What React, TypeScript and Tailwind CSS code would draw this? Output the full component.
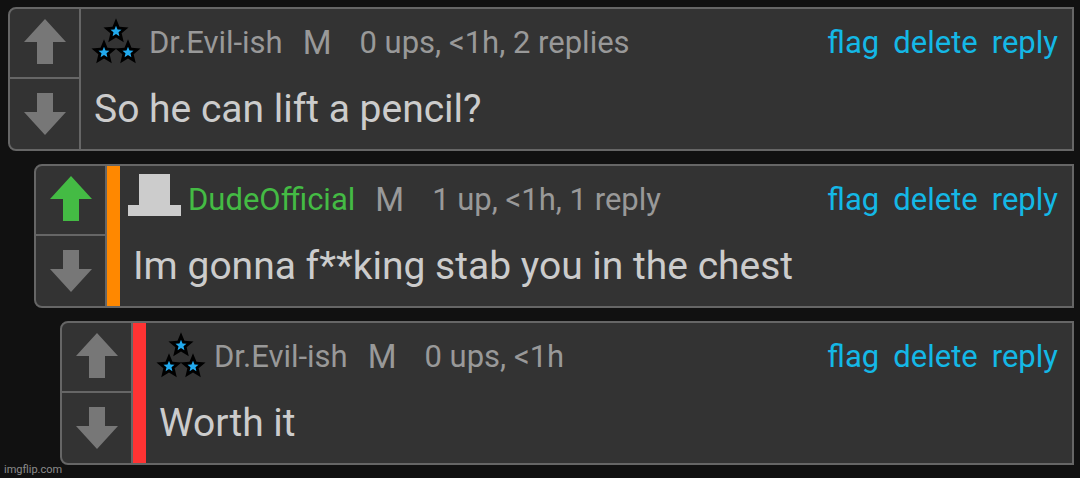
import React from 'react';

interface Comment {
  id: number;
  user: string;
  icon: 'stars' | 'hat';
  meta: string;
  text: string;
  upvoted?: boolean;
  nameClass: string;
  indentClass: string;
  barClass?: string;
}

const comments: Comment[] = [
  {
    id: 1,
    user: 'Dr.Evil-ish',
    icon: 'stars',
    meta: '0 ups, <1h, 2 replies',
    text: 'So he can lift a pencil?',
    nameClass: 'text-[#999]',
    indentClass: 'ml-0',
  },
  {
    id: 2,
    user: 'DudeOfficial',
    icon: 'hat',
    meta: '1 up, <1h, 1 reply',
    text: 'Im gonna f**king stab you in the chest',
    upvoted: true,
    nameClass: 'text-[#44bb44]',
    indentClass: 'ml-[26px]',
    barClass: 'bg-[#ff8800]',
  },
  {
    id: 3,
    user: 'Dr.Evil-ish',
    icon: 'stars',
    meta: '0 ups, <1h',
    text: 'Worth it',
    nameClass: 'text-[#999]',
    indentClass: 'ml-[52px]',
    barClass: 'bg-[#ff3333]',
  },
];

const starPoints = (cx: number, cy: number, r: number) =>
  Array.from({ length: 10 }, (_, i) => {
    const radius = i % 2 === 0 ? r : r * 0.45;
    const angle = (Math.PI / 5) * i - Math.PI / 2;
    return `${(cx + radius * Math.cos(angle)).toFixed(2)},${(cy + radius * Math.sin(angle)).toFixed(2)}`;
  }).join(' ');

const StarsIcon: React.FC = () => (
  <svg width="54" height="48" viewBox="0 0 54 48" aria-hidden="true" className="shrink-0">
    {[[27, 14.5], [15, 35.5], [39, 35.5]].map(([cx, cy]) => (
      <g key={`${cx}-${cy}`}>
        <polygon points={starPoints(cx, cy, 13.2)} fill="#000" />
        <polygon points={starPoints(cx, cy, 5.8)} fill="#22aaee" />
      </g>
    ))}
  </svg>
);

const HatIcon: React.FC = () => (
  <svg width="54" height="48" viewBox="0 0 54 48" aria-hidden="true" className="shrink-0">
    <path d="M11 0h31v31h11v11H0V31h11z" fill="#ccc" />
  </svg>
);

const VoteButtons: React.FC<{ upvoted?: boolean }> = ({ upvoted }) => (
  <div className="flex flex-col w-[71px] shrink-0 border-r-2 border-[#666]">
    <button
      aria-label="Upvote"
      className={`h-[70px] flex items-center justify-center border-b-2 border-[#666] ${upvoted ? 'text-[#44bb44]' : 'text-[#777]'}`}
    >
      <svg width="42" height="48" viewBox="0 0 42 48" fill="currentColor">
        <path d="M21 0l21 23H29v22H13V23H0z" />
      </svg>
    </button>
    <button aria-label="Downvote" className="h-[70px] flex items-center justify-center text-[#777]">
      <svg width="42" height="42" viewBox="0 0 42 42" fill="currentColor">
        <path d="M13 0h16v19h13L21 42 0 19h13z" />
      </svg>
    </button>
  </div>
);

const CommentCard: React.FC<{ comment: Comment }> = ({ comment }) => (
  <article
    className={`flex overflow-hidden rounded-l-lg border-2 border-[#666] bg-[#333] ${comment.indentClass}`}
  >
    <VoteButtons upvoted={comment.upvoted} />
    {comment.barClass && <div className={`w-[13px] shrink-0 ${comment.barClass}`} />}
    <div className="flex-1 min-w-0 pt-2">
      <div className="flex items-start h-12 pl-2 pr-3.5 text-[31px] leading-[52px] whitespace-nowrap">
        {comment.icon === 'hat' ? <HatIcon /> : <StarsIcon />}
        <a href="#user" className={`ml-1.5 ${comment.nameClass}`}>{comment.user}</a>
        <span className="ml-5 text-[33px] text-[#999]">M</span>
        <span className="ml-7 text-[#999]">{comment.meta}</span>
        <div className="flex gap-3.5 ml-auto text-[#14b8e6]">
          <button>flag</button>
          <button>delete</button>
          <button>reply</button>
        </div>
      </div>
      <p className="mt-5 pl-[13px] text-[39px] leading-[48px] text-[#ccc]">{comment.text}</p>
    </div>
  </article>
);

const App: React.FC = () => {
  return (
    <div className="min-h-screen flex flex-col bg-[#111] font-[Roboto,sans-serif]">
      <main className="flex flex-col gap-[13px] pt-[7px] pl-2 pr-1.5">
        {comments.map((comment) => (
          <CommentCard key={comment.id} comment={comment} />
        ))}
      </main>
      <footer className="-mt-1 pl-1 text-[11px] leading-[18px] text-[#8c8c8c]">imgflip.com</footer>
    </div>
  );
};

export default App;
